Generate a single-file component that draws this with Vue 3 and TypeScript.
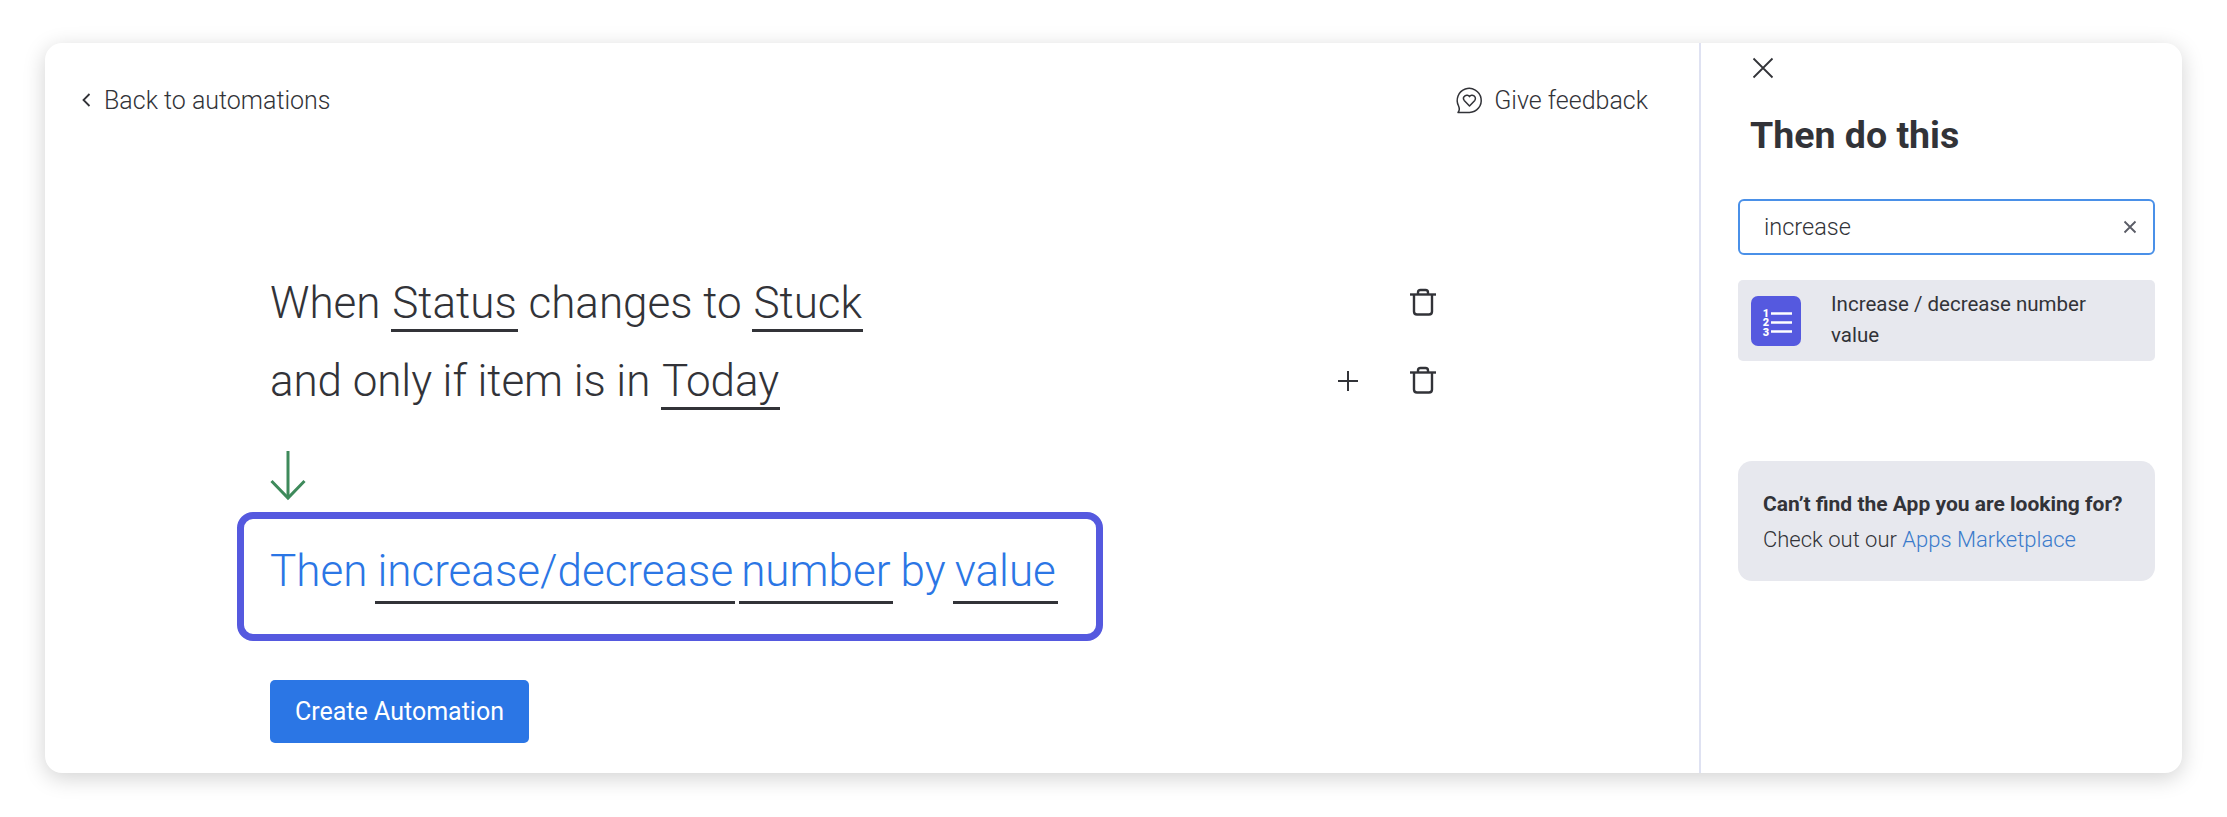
<template>
  <div class="page">
    <div class="card">
      <div class="main">
        <div class="top">
          <a class="back">
            <svg width="12" height="20" viewBox="0 0 12 20" fill="none"><path d="M9.5 4 L3.5 10 L9.5 16" stroke="#323338" stroke-width="1.8" /></svg>
            <span>Back to automations</span>
          </a>
          <a class="feedback">
            <svg width="28" height="28" viewBox="0 0 28 28" fill="none" stroke="#323338" stroke-width="1.5">
              <path d="M3 26.4 H14.5 A12 12 0 1 0 3.6 20 C4.6 22.4 4.4 24.8 3 26.4 Z" stroke-linejoin="round" />
              <path d="M14.5 20 L9.2 14.4 A3.2 3.2 0 0 1 14.5 10.6 A3.2 3.2 0 0 1 19.8 14.4 Z" stroke-linejoin="round" />
            </svg>
            <span>Give feedback</span>
          </a>
        </div>

        <div class="rules">
          <div class="row" v-for="(row, i) in rows" :key="i">
            <div class="sentence">
              <template v-for="(part, j) in row.parts" :key="j">
                <span v-if="part.token" class="token">{{ part.text }}</span>
                <template v-else>{{ part.text }}</template>
              </template>
            </div>
            <svg v-if="row.canAdd" class="plus" width="22" height="22" viewBox="0 0 22 22" stroke="#323338" stroke-width="2"><path d="M11 1 V21 M1 11 H21" /></svg>
            <svg class="trash" width="28" height="28" viewBox="0 0 28 28" fill="none" stroke="#323338" stroke-width="2.4">
              <path d="M1 6.5 H27" />
              <path d="M9 6 V4.5 Q9 2 11.5 2 H16.5 Q19 2 19 4.5 V6" />
              <path d="M5 6.5 V23.5 Q5 26.5 8 26.5 H20 Q23 26.5 23 23.5 V6.5" />
            </svg>
          </div>
        </div>

        <svg class="arrow" width="36" height="50" viewBox="0 0 36 50" fill="none" stroke="#3e8a5b" stroke-width="3">
          <path d="M18 0 V47" />
          <path d="M1.5 30 L18 47 L34.5 30" />
        </svg>

        <div class="then">
          <span>Then</span>
          <span class="token first">increase/decrease</span>
          <span class="token second">number</span>
          <span class="by">by</span>
          <span class="token last">value</span>
        </div>

        <button class="create">Create Automation</button>
      </div>

      <div class="side">
        <svg class="close" width="22" height="22" viewBox="0 0 22 22" stroke="#323338" stroke-width="1.8"><path d="M1.5 1.5 L20.5 20.5 M20.5 1.5 L1.5 20.5" /></svg>
        <h2>Then do this</h2>

        <div class="search">
          <span>{{ query }}</span>
          <svg width="14" height="14" viewBox="0 0 14 14" stroke="#5a5c66" stroke-width="1.8"><path d="M1.5 1.5 L12.5 12.5 M12.5 1.5 L1.5 12.5" /></svg>
        </div>

        <div class="result">
          <svg class="result-icon" width="50" height="50" viewBox="0 0 50 50">
            <rect width="50" height="50" rx="7" fill="#5559df" />
            <g fill="#fff" font-family="Roboto, sans-serif" font-weight="900" font-size="11" text-anchor="middle">
              <text x="15" y="21">1</text>
              <text x="15" y="30">2</text>
              <text x="15" y="40">3</text>
            </g>
            <path d="M20 17.5 H41 M20 26.5 H41 M20 35.5 H41" stroke="#fff" stroke-width="2.4" />
          </svg>
          <div class="result-text">Increase / decrease number value</div>
        </div>

        <div class="promo">
          <b>Can’t find the App you are looking for?</b>
          <p>Check out our <a>Apps Marketplace</a></p>
        </div>
      </div>
    </div>
  </div>
</template>

<script setup lang="ts">
interface Part {
  text: string
  token?: boolean
}

const query = 'increase'

const rows: { parts: Part[]; canAdd: boolean }[] = [
  {
    canAdd: false,
    parts: [
      { text: 'When ' },
      { text: 'Status', token: true },
      { text: ' changes to ' },
      { text: 'Stuck', token: true }
    ]
  },
  {
    canAdd: true,
    parts: [
      { text: 'and only if item is in ' },
      { text: 'Today', token: true }
    ]
  }
]
</script>

<style>
body {
  background: #fff;
}
</style>

<style scoped>
.page {
  width: 2227px;
  height: 817px;
  padding: 43px 45px 44px 45px;
  box-sizing: border-box;
  font-family: Roboto, "Liberation Sans", sans-serif;
  color: #323338;
}

.card {
  display: flex;
  height: 100%;
  background: #fff;
  border-radius: 17px;
  box-shadow: 0 5px 22px rgba(0, 0, 0, 0.18);
  overflow: hidden;
}

.main {
  width: 1656px;
  padding: 0 0 0 225px;
  box-sizing: border-box;
  border-right: 2px solid #dfe2f2;
}

.top {
  display: flex;
  justify-content: space-between;
  align-items: center;
  height: 56px;
  margin: 29px 51px 0 -190px;
  font-size: 25px;
  font-weight: 300;
}

.back,
.feedback {
  display: flex;
  align-items: center;
}

.back span {
  margin-left: 12px;
}

.feedback span {
  margin-left: 11px;
}

.rules {
  margin-top: 137px;
  width: 1167px;
}

.row {
  display: flex;
  align-items: center;
  height: 78px;
}

.sentence {
  font-size: 44px;
  font-weight: 300;
  white-space: pre;
}

.row:last-child .sentence {
  letter-spacing: -0.08px;
}

.token {
  display: inline-block;
  line-height: 52px;
  padding: 0 1px;
  border-bottom: 3px solid #323338;
}

.plus {
  margin-left: auto;
  margin-right: 50px;
  margin-top: -2px;
}

.trash {
  margin-left: auto;
  margin-top: -4px;
}

.plus + .trash {
  margin-left: 0;
}

.arrow {
  display: block;
  margin-top: 30px;
}

.then {
  display: flex;
  align-items: baseline;
  width: 866px;
  height: 129px;
  margin: 11px 0 0 -33px;
  padding: 26px 0 0 26px;
  box-sizing: border-box;
  border: 7px solid #5559df;
  border-radius: 16px;
  font-size: 44px;
  font-weight: 300;
  line-height: 52px;
  color: #2b76e5;
}

.then .token {
  padding: 0 2px 4px;
}

.then .first {
  margin-left: 8px;
}

.then .second {
  margin-left: 4px;
}

.then .by {
  margin-left: 8px;
}

.then .last {
  margin-left: 7px;
}

.create {
  display: block;
  width: 259px;
  height: 63px;
  margin-top: 39px;
  border: 0;
  border-radius: 5px;
  background: #2b76e5;
  color: #fff;
  font-family: inherit;
  font-size: 25px;
}

.side {
  flex: 1;
  padding: 0 27px 0 37px;
}

.close {
  display: block;
  margin: 14px 0 0 14px;
}

h2 {
  margin: 33px 0 0 12px;
  font-size: 37.5px;
  line-height: 46px;
  font-weight: 700;
}

.search {
  display: flex;
  justify-content: space-between;
  align-items: center;
  height: 56px;
  margin-top: 41px;
  padding: 0 16px 0 24px;
  box-sizing: border-box;
  border: 2px solid #4a90e8;
  border-radius: 6px;
  font-size: 23.5px;
  font-weight: 300;
}

.result {
  display: flex;
  align-items: center;
  height: 81px;
  margin-top: 25px;
  padding-left: 13px;
  background: #e7e8ee;
  border-radius: 5px;
}

.result-text {
  width: 300px;
  margin-left: 30px;
  padding-bottom: 2px;
  font-size: 20.5px;
  line-height: 31px;
}

.promo {
  height: 120px;
  margin-top: 100px;
  padding: 25px 0 0 25px;
  box-sizing: border-box;
  background: #e7e8ee;
  border-radius: 14px;
  font-size: 21px;
  line-height: 36px;
}

.promo p {
  margin: 0;
  font-size: 22px;
  font-weight: 300;
}

.promo a {
  color: #3b7bcb;
}
</style>
